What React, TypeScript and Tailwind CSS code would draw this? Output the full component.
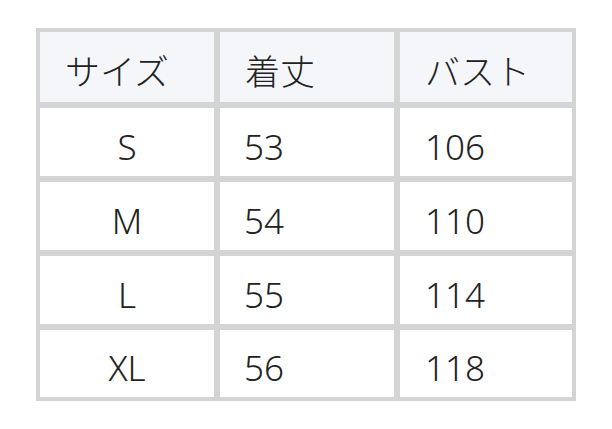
const header = ["サイズ", "着丈", "バスト"];

const rows = [
  ["S", "53", "106"],
  ["M", "54", "110"],
  ["L", "55", "114"],
  ["XL", "56", "118"],
];

export default function App() {
  return (
    <div
      className="min-h-screen bg-white pl-[36px] pt-[28px] text-[#222222]"
      style={{ fontFamily: '"Noto Sans", "Noto Sans CJK JP", sans-serif' }}
    >
      <div className="grid w-[540px] grid-cols-[174px_174px_172px] gap-[6px] bg-[#d4d4d4] p-[4px] text-[35px] font-light leading-none">
        {header.map((h) => (
          <div key={h} className="flex h-[70px] items-center bg-[#f5f6fa] pl-[25px] pt-[8px]">
            {h}
          </div>
        ))}
        {rows.map((r, i) => (
          <div key={r[0]} className="contents">
            <div className={`flex items-center justify-center bg-white pt-[8px] ${i === 3 ? "h-[67px]" : "h-[68px]"}`}>
              {r[0]}
            </div>
            <div className="flex items-center bg-white pl-[24px] pt-[8px]">{r[1]}</div>
            <div className="flex items-center bg-white pl-[25px] pt-[8px]">{r[2]}</div>
          </div>
        ))}
      </div>
    </div>
  );
}
